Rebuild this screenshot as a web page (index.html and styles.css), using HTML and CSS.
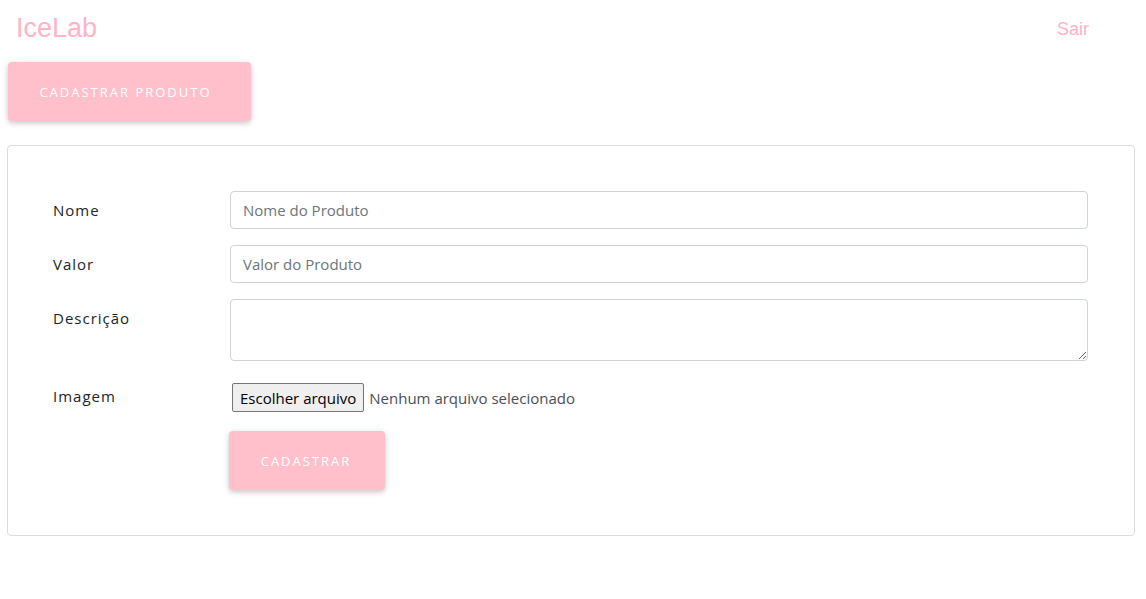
FILE: index.html
```html
<!DOCTYPE html>
<html lang="pt-BR">
<head>
<meta charset="utf-8">
<title>IceLab</title>
<link rel="stylesheet" href="styles.css">
</head>
<body>
<nav class="navbar">
  <a class="brand" href="#">IceLab</a>
  <a class="logout" href="#">Sair</a>
</nav>
<div class="actions">
  <button class="btn-pink btn-top" type="button">Cadastrar Produto</button>
</div>
<div class="card">
  <form class="form">
    <label class="lbl">Nome</label>
    <input class="ctrl" type="text" placeholder="Nome do Produto">
    <label class="lbl">Valor</label>
    <input class="ctrl" type="text" placeholder="Valor do Produto">
    <label class="lbl">Descrição</label>
    <textarea class="ctrl area"></textarea>
    <label class="lbl lbl-img">Imagem</label>
    <div class="file">
      <span class="file-btn">Escolher arquivo</span>
      <span class="file-txt">Nenhum arquivo selecionado</span>
    </div>
    <span></span>
    <div class="submit-row">
      <button class="btn-pink btn-submit" type="button">Cadastrar</button>
    </div>
  </form>
</div>
</body>
</html>
```
FILE: styles.css
```css
* { box-sizing: border-box; }
body {
  margin: 0;
  background: #fff;
  font-family: "Open Sans", "Noto Sans", sans-serif;
  color: #212529;
}
.navbar {
  display: flex;
  justify-content: space-between;
  align-items: center;
  height: 58px;
  padding: 0 57px 0 16px;
}
.brand {
  font-family: "Liberation Sans", Arial, sans-serif;
  font-size: 27px;
  color: #ffb3c6;
  text-decoration: none;
  margin-top: -1px;
}
.logout {
  font-family: "Liberation Sans", Arial, sans-serif;
  font-size: 18px;
  color: #ffb3c6;
  text-decoration: none;
  margin-top: 1px;
}
.actions {
  padding: 4px 8px 0;
}
.btn-pink {
  background: #ffc0cb;
  color: #fff;
  border: none;
  border-radius: 4px;
  box-shadow: 0 2px 5px rgba(0,0,0,0.16), 0 2px 8px rgba(0,0,0,0.08);
  text-transform: uppercase;
  font-family: "Open Sans", "Noto Sans", sans-serif;
  font-size: 13px;
  letter-spacing: 2px;
  cursor: pointer;
}
.btn-top {
  width: 243px;
  height: 59px;
  padding: 0 8px 0 0;
}
.card {
  margin: 24px 11px 0 7px;
  border: 1px solid #dcdcdc;
  border-radius: 4px;
  padding: 45px 46px 45px 45px;
}
.form {
  display: grid;
  grid-template-columns: 177px 1fr;
  row-gap: 16px;
}
.lbl {
  font-size: 15px;
  letter-spacing: 1px;
  padding-top: 9px;
  color: #212529;
}
.ctrl {
  height: 38px;
  border: 1px solid #ced4da;
  border-radius: 4px;
  padding: 6px 12px;
  font-family: "Open Sans", "Noto Sans", sans-serif;
  font-size: 15px;
  color: #495057;
  width: 100%;
}
.ctrl::placeholder { color: #6c757d; }
.area {
  height: 62px;
  resize: vertical;
}
.lbl-img {
  margin-top: 7px;
  padding-top: 2px;
}
.file {
  margin-top: 6px;
  display: flex;
  align-items: center;
  gap: 5px;
  padding-left: 2px;
}
.file-btn {
  background: #efefef;
  border: 1px solid #767676;
  border-radius: 2px;
  height: 29px;
  display: inline-flex;
  align-items: center;
  padding: 0 7px;
  font-size: 15px;
  color: #000;
}
.file-txt {
  font-size: 15px;
  color: #495057;
}
.submit-row {
  margin-left: -1px;
  margin-top: 3px;
}
.btn-submit {
  width: 156px;
  height: 59px;
  padding: 0 2px 0 0;
}
```
